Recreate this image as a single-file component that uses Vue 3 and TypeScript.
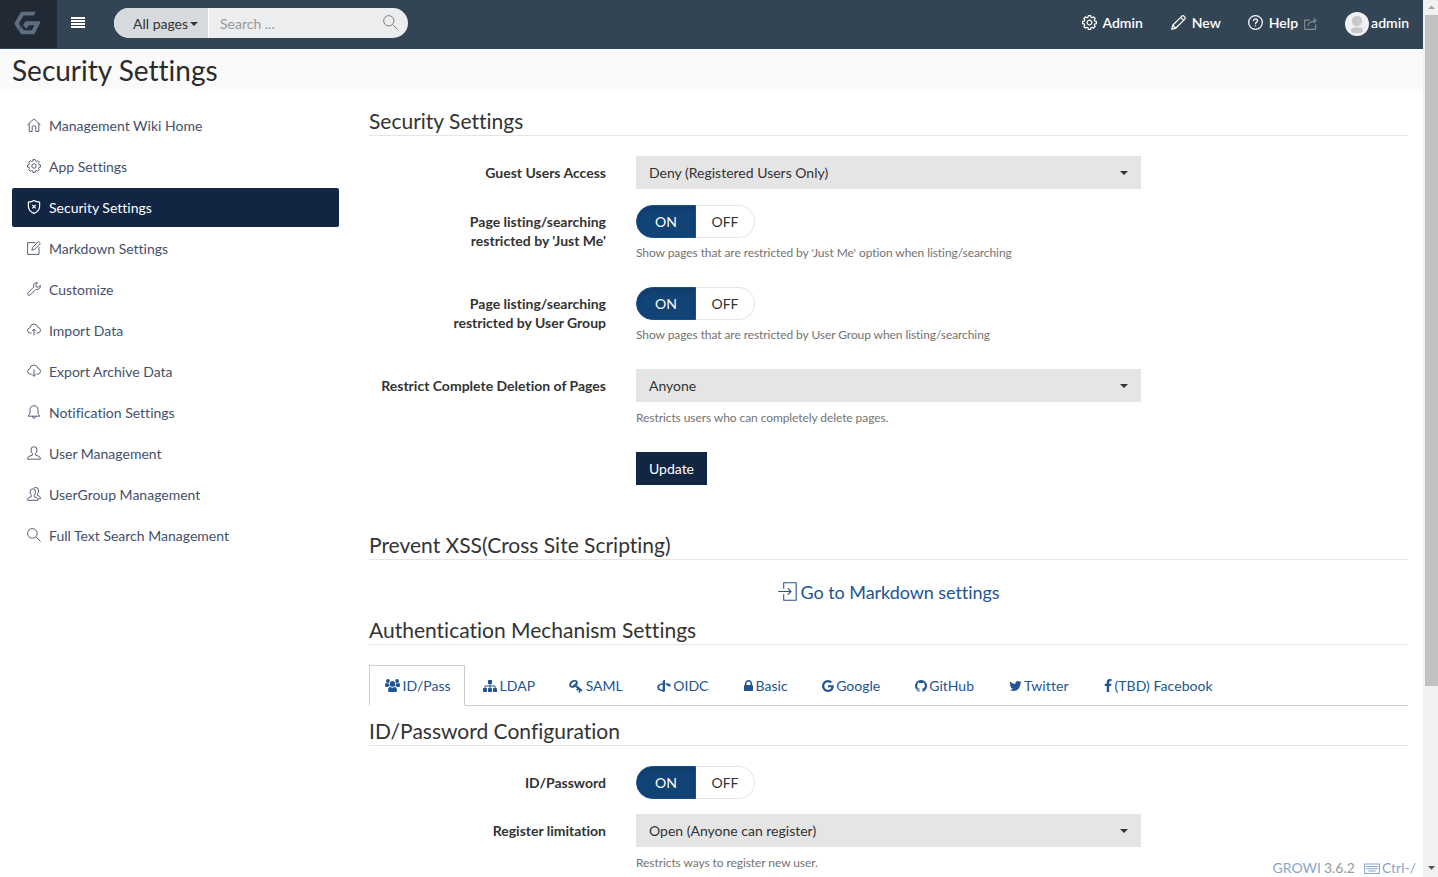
<script setup lang="ts">
import { ref } from 'vue'

interface Glyph {
  box: string
  w: number
  h: number
  d: string[]
  solid?: boolean
}

function gear(c: number, outer: number, inner: number): string {
  const pts: string[] = []
  const at = (r: number, a: number) =>
    `${(c + r * Math.cos(a)).toFixed(2)} ${(c + r * Math.sin(a)).toFixed(2)}`
  for (let i = 0; i < 8; i++) {
    const a = (i * Math.PI) / 4
    pts.push(at(inner, a - 0.27), at(outer, a - 0.17), at(outer, a + 0.17), at(inner, a + 0.27))
  }
  return 'M' + pts.join('L') + 'Z'
}

const line = (...d: string[]): Glyph => ({ box: '0 0 14 14', w: 14, h: 14, d })
const solid = (x: number, width: number, d: string): Glyph => ({
  box: `${x} 0 ${width} 1792`,
  w: width / 128,
  h: 14,
  d: [d],
  solid: true,
})

const cloud =
  'M4.6 10.1H3.3Q.6 9.9.5 7.5Q.6 5.3 2.8 4.9Q3.3 1.1 6.8 1Q10 1.1 10.9 4.3Q13.5 4.8 13.5 7.3Q13.4 9.9 10.8 10.1H9.4'

const glyphs: Record<string, Glyph> = {
  home: line('M.6 6.8L7 .8L13.4 6.8M2.2 5.4V13.4H5.2V8.8Q5.2 8 6 8H8Q8.8 8 8.8 8.8V13.4H11.8V5.4'),
  gear: line(gear(7, 6.5, 5.1), 'M9.2 7A2.2 2.2 0 1 1 4.8 7A2.2 2.2 0 1 1 9.2 7Z'),
  shield: line(
    'M7 .6Q9.5 2 12.6 2.1V6.5Q12.4 11 7 13.4Q1.6 11 1.4 6.5V2.1Q4.5 2 7 .6Z',
    'M5.2 4.8L8.8 8.4M8.8 4.8L5.2 8.4',
  ),
  note: line('M8.6 1.6H.6V13.4H12V6', 'M4.8 9.2L5.6 6.4L11.4.7L13.3 2.5L7.5 8.4Z'),
  wrench: line(
    'M13.3 3.4L11.2 5.2L9.2 4.8L8.8 2.8L10.6.7Q8.6.3 7.2 1.8Q6 3.2 6.6 5.2L1 10.8Q.2 12 1.1 12.9Q2.1 13.8 3.2 13L8.8 7.4Q10.8 8 12.3 6.6Q13.7 5.2 13.3 3.4Z',
  ),
  upload: line(cloud, 'M7 12.4V6.2M5 8.2L7 6.2L9 8.2'),
  download: line(cloud, 'M7 5.6V12.3M5.2 10.4L7 12.3L8.8 10.4'),
  bell: line(
    'M1.2 11.2H12.8Q11 9.8 11 7V5Q10.8.8 7 .7Q3.2.8 3 5V7Q3 9.8 1.2 11.2Z',
    'M5.5 11.4Q5.6 13.3 7 13.3Q8.4 13.3 8.5 11.4',
  ),
  user: line(
    'M7 .7Q10.2.7 10 4Q9.9 6.5 8.6 7.7V9.2L12 10.4Q13.4 10.8 13.4 13.2H.6Q.6 10.8 2 10.4L5.4 9.2V7.7Q4.1 6.5 4 4Q3.8.7 7 .7Z',
  ),
  users: line(
    'M5.8 1.8Q8.7 1.8 8.5 5Q8.4 7.1 7.2 8.3V9.6L9.8 10.6Q10.9 11 10.9 13.3H.6Q.6 11 1.8 10.6L4.4 9.6V8.3Q3.2 7.1 3.1 5Q3 1.8 5.8 1.8Z',
    'M6.8 1.2Q7.6.5 9 .5Q11.8.6 11.6 3.9Q11.5 6 10.3 7.1V8.4L12.4 9.2Q13.4 9.6 13.4 11.8H11.4',
  ),
  search: line('M10.2 5.4A4.8 4.8 0 1 1 .6 5.4A4.8 4.8 0 1 1 10.2 5.4Z', 'M9 9L13.6 13.5'),
  pencil: line('M.7 13.3L1.6 9.6L10.2 1Q11.2.2 12.4 1.4Q13.8 2.7 12.9 3.8L4.3 12.4Z', 'M9 2.2L11.8 5M1.6 9.6L4.3 12.4'),
  help: line(
    'M13.4 7A6.4 6.4 0 1 1 .6 7A6.4 6.4 0 1 1 13.4 7Z',
    'M5.2 5.5Q5.2 3.7 7 3.7Q8.9 3.7 8.9 5.4Q8.9 6.3 7.8 6.9Q7 7.4 7 8.6M7 9.5V10.6',
  ),
  share: line('M6.2 3.4H.7V13.3H12.5V8.2', 'M4.3 9.6Q4.4 4.5 12.8 4M10.2 1.4L13 4L10.2 6.6'),
  login: line('M4.2 5V.6H13.4V13.4H4.2V9', 'M.2 7H9.6M7.2 4.7L9.6 7L7.2 9.3'),
  keyboard: line('M.5 3.5H13.5V11.8H.5Z', 'M2 5.6H12M2 7.6H12M3.8 9.7H10.2'),
  sitemap: solid(
    0,
    1792,
    'M1792 1248v320q0 40-28 68t-68 28h-320q-40 0-68-28t-28-68v-320q0-40 28-68t68-28h96v-192h-512v192h96q40 0 68 28t28 68v320q0 40-28 68t-68 28h-320q-40 0-68-28t-28-68v-320q0-40 28-68t68-28h96v-192h-512v192h96q40 0 68 28t28 68v320q0 40-28 68t-68 28h-320q-40 0-68-28t-28-68v-320q0-40 28-68t68-28h96v-192q0-52 38-90t90-38h512v-192h-96q-40 0-68-28t-28-68v-320q0-40 28-68t68-28h320q40 0 68 28t28 68v320q0 40-28 68t-68 28h-96v192h512q52 0 90 38t38 90v192h96q40 0 68 28t28 68z',
  ),
  lock: solid(
    320,
    1152,
    'M640 768h512v-192q0-106-75-181t-181-75-181 75-75 181v192zm832 96v576q0 40-28 68t-68 28h-960q-40 0-68-28t-28-68v-576q0-40 28-68t68-28h32v-192q0-184 132-316t316-132 316 132 132 316v192h32q40 0 68 28t28 68z',
  ),
  google: solid(
    128,
    1536,
    'M896 786h725q12 67 12 128 0 217-91 387.5t-259.5 266.5-386.5 96q-157 0-299-60.5t-245-163.5-163.5-245-60.5-299 60.5-299 163.5-245 245-163.5 299-60.5q300 0 515 201l-209 201q-123-119-306-119-129 0-238.5 65t-173.5 176.5-64 243.5 64 243.5 173.5 176.5 238.5 65q87 0 160-24t120-60 82-82 51.5-87 22.5-78h-436v-264z',
  ),
  github: solid(
    128,
    1536,
    'M896 128q209 0 385.5 103t279.5 279.5 103 385.5q0 251-146.5 451.5t-378.5 277.5q-27 5-40-7t-13-30q0-3 .5-76.5t.5-134.5q0-97-52-142 57-6 102.5-18t94-39 81-66.5 53-105 20.5-150.5q0-119-79-206 37-91-8-204-28-9-81 11t-92 44l-38 24q-93-26-192-26t-192 26q-16-11-42.5-27t-83.5-38.5-85-13.5q-45 113-8 204-79 87-79 206 0 85 20.5 150t52.5 105 80.5 67 94 39 102.5 18q-39 36-49 103-21 10-45 15t-57 5-65.5-21.5-55.5-62.5q-19-32-48.5-52t-49.5-24l-20-3q-21 0-29 4.5t-5 11.5 9 14 13 12l7 5q22 10 43.5 38t31.5 51l10 23q13 38 44 61.5t67 30 69.5 7 55.5-3.5l23-4q0 38 .5 88.5t.5 54.5q0 18-13 30t-40 7q-232-77-378.5-277.5t-146.5-451.5q0-209 103-385.5t279.5-279.5 385.5-103z',
  ),
  twitter: solid(
    64,
    1664,
    'M1684 408q-67 98-162 167 1 14 1 42 0 130-38 259.5t-115.5 248.5-184.5 210.5-258 146-323 54.5q-271 0-496-145 35 4 78 4 225 0 401-138-105-2-188-64.5t-114-159.5q33 5 61 5 43 0 85-11-112-23-185.5-111.5t-73.5-205.5v-4q68 38 146 41-66-44-105-115t-39-154q0-88 44-163 121 149 294.5 238.5t371.5 99.5q-8-38-8-74 0-134 94.5-228.5t228.5-94.5q140 0 236 102 109-21 205-78-37 115-142 178 93-10 186-50z',
  ),
  facebook: solid(
    384,
    1024,
    'M1343 12v264h-157q-86 0-116 36t-30 108v189h293l-39 296h-254v759h-306v-759h-255v-296h255v-218q0-186 104-288.5t277-102.5q147 0 228 12z',
  ),
  group: {
    box: '0 0 15 14', w: 15, h: 14, solid: true,
    d: [
      'M4.9 4.9A2.6 2.9 0 1 1 10.1 4.9A2.6 2.9 0 1 1 4.9 4.9Z',
      'M5 7.7Q7.5 9.6 10 7.7Q12.1 8.3 12 11.4Q12 13 10.4 13H4.6Q3 13 3 11.4Q2.9 8.3 5 7.7Z',
      'M1 2A1.9 1.9 0 1 1 4.8 2A1.9 1.9 0 1 1 1 2ZM10.2 2A1.9 1.9 0 1 1 14 2A1.9 1.9 0 1 1 10.2 2Z',
      'M.9 3.8Q2.4 4.9 4 4.2Q3.9 5.9 4.9 7Q3.6 7 2.8 8H1.3Q0 8 0 6.8Q0 4.2.9 3.8ZM14.1 3.8Q12.6 4.9 11 4.2Q11.1 5.9 10.1 7Q11.4 7 12.2 8H13.7Q15 8 15 6.8Q15 4.2 14.1 3.8Z',
    ],
  },
  key: {
    box: '0 0 14 14', w: 14, h: 14, solid: true,
    d: [
      'M.2 6Q.2 3.9 2 2.3Q3.8 .8 6 1Q8.7 1.3 8.8 3.9Q8.8 5.8 7.2 7.3Q5.5 8.9 3.2 8.8Q.3 8.6.2 6ZM2 6.2Q2.3 7.4 3.8 6.7L6.6 4.2Q7.5 2.9 6.2 2.6Q5 2.4 3.5 3.6Q2 4.9 2 6.2Z',
      'M6.6 8L8 6.4L13.6 11.2L12.4 12.4L11.6 11.8L11 12.5L11.7 13.1L10.7 14L9.2 12.6L10.2 11.3L9.5 10.7L8.3 11.8L7.1 10.7L8.2 9.5Z',
    ],
  },
  openid: {
    box: '0 0 14 14', w: 14, h: 14, solid: true,
    d: [
      'M5.7 1.8L8 .8V12.2L5.7 13.3V12.2Q.2 11.6.2 8.2Q.2 5 5.7 4.2V5.6Q2.1 6.2 2.1 8.2Q2.1 10.2 5.7 10.7Z',
      'M8.6 4.1Q10.6 4.3 12 5.1L13.1 4.5L13.7 7.7L9.5 6.8L10.7 6.1Q9.8 5.7 8.6 5.5Z',
    ],
  },
}

const menu = [
  { icon: 'home', label: 'Management Wiki Home' },
  { icon: 'gear', label: 'App Settings' },
  { icon: 'shield', label: 'Security Settings' },
  { icon: 'note', label: 'Markdown Settings' },
  { icon: 'wrench', label: 'Customize' },
  { icon: 'upload', label: 'Import Data' },
  { icon: 'download', label: 'Export Archive Data' },
  { icon: 'bell', label: 'Notification Settings' },
  { icon: 'user', label: 'User Management' },
  { icon: 'users', label: 'UserGroup Management' },
  { icon: 'search', label: 'Full Text Search Management' },
]
const activeMenu = ref(2)

const tabs = [
  { icon: 'group', label: 'ID/Pass' },
  { icon: 'sitemap', label: 'LDAP' },
  { icon: 'key', label: 'SAML' },
  { icon: 'openid', label: 'OIDC' },
  { icon: 'lock', label: 'Basic' },
  { icon: 'google', label: 'Google' },
  { icon: 'github', label: 'GitHub' },
  { icon: 'twitter', label: 'Twitter' },
  { icon: 'facebook', label: '(TBD) Facebook' },
]
const activeTab = ref(0)

const rows = [
  { kind: 'select', label: ['Guest Users Access'], value: 'Deny (Registered Users Only)', help: '' },
  { kind: 'toggle', label: ['Page listing/searching', "restricted by 'Just Me'"], value: '', help: "Show pages that are restricted by 'Just Me' option when listing/searching" },
  { kind: 'toggle', label: ['Page listing/searching', 'restricted by User Group'], value: '', help: 'Show pages that are restricted by User Group when listing/searching' },
  { kind: 'select', label: ['Restrict Complete Deletion of Pages'], value: 'Anyone', help: 'Restricts users who can completely delete pages.' },
]
const authRows = [
  { kind: 'toggle', label: ['ID/Password'], value: '', help: '' },
  { kind: 'select', label: ['Register limitation'], value: 'Open (Anyone can register)', help: 'Restricts ways to register new user.' },
]
const sections = { rows, authRows }

const navLinks = [
  { icon: 'gear', label: 'Admin', ext: false },
  { icon: 'pencil', label: 'New', ext: false },
  { icon: 'help', label: 'Help', ext: true },
]
</script>

<template>
  <div class="window">
    <div class="page">
      <header class="navbar">
        <a class="logo">
          <svg width="27" height="24" viewBox="0 0 27 24">
            <path d="M7 .8H21.8L19.8 4.6H9.6L4.9 12.4L6.8 15.8L4.4 19.4L.3 12.4Z" />
            <path d="M11.3 10.3H26V12L20.4 23.2H7.2L4.8 19.2L7.4 15.2L9.7 19.2H17.8L20.4 14.2H14.8L12.6 17.8L9 14.4Z" />
          </svg>
        </a>
        <button class="burger"><i /><i /><i /><i /></button>
        <div class="search">
          <span class="scope">All pages<b class="caret" /></span>
          <span class="query">Search ...</span>
          <svg class="ico" width="15" height="15" viewBox="0 0 14 14">
            <path v-for="d in glyphs.search.d" :key="d" :d="d" />
          </svg>
        </div>
        <nav class="links">
          <a v-for="l in navLinks" :key="l.label" :class="l.label.toLowerCase()">
            <svg class="ico" width="15" height="15" viewBox="0 0 14 14">
              <path v-for="d in glyphs[l.icon].d" :key="d" :d="d" />
            </svg>
            <span>{{ l.label }}</span>
            <svg v-if="l.ext" class="ico ext" width="13" height="13" viewBox="0 0 14 14">
              <path v-for="d in glyphs.share.d" :key="d" :d="d" />
            </svg>
          </a>
          <a class="account">
            <svg width="24" height="24" viewBox="0 0 24 24">
              <circle cx="12" cy="12" r="12" fill="#eff0f3" />
              <circle cx="12" cy="9" r="5.2" fill="#c8c8c9" />
              <path d="M6 18.4Q6 15.2 12 15.2Q18 15.2 18 18.4Q18 21 12 21Q6 21 6 18.4Z" fill="#c8c8c9" />
            </svg>
            <span>admin</span>
          </a>
        </nav>
      </header>

      <div class="title"><h1>Security Settings</h1></div>

      <div class="body">
        <aside class="side">
          <a v-for="(m, i) in menu" :key="m.label" :class="{ active: i === activeMenu }" @click="activeMenu = i">
            <svg class="ico" width="14" height="14" viewBox="0 0 14 14">
              <path v-for="d in glyphs[m.icon].d" :key="d" :d="d" />
            </svg>
            <span>{{ m.label }}</span>
          </a>
        </aside>

        <main class="main">
          <h2>Security Settings</h2>
          <div class="form">
            <div v-for="(r, i) in sections.rows" :key="i" class="row" :class="[r.kind + '-row', { tall: r.help }]">
              <label><span v-for="t in r.label" :key="t">{{ t }}</span></label>
              <div class="field">
                <div v-if="r.kind === 'select'" class="select">{{ r.value }}<b class="caret" /></div>
                <div v-else class="toggle"><span class="on">ON</span><span class="off">OFF</span></div>
                <p v-if="r.help">{{ r.help }}</p>
              </div>
            </div>
            <button class="update">Update</button>
          </div>

          <h2 class="xss">Prevent XSS(Cross Site Scripting)</h2>
          <a class="goto">
            <svg class="ico" width="19" height="19" viewBox="0 0 14 14">
              <path v-for="d in glyphs.login.d" :key="d" :d="d" />
            </svg>
            <span>Go to Markdown settings</span>
          </a>

          <h2 class="auth">Authentication Mechanism Settings</h2>
          <div class="tabs">
            <a v-for="(t, i) in tabs" :key="t.label" :class="[t.icon, { current: i === activeTab }]" @click="activeTab = i">
              <svg class="fill" :width="glyphs[t.icon].w" :height="glyphs[t.icon].h" :viewBox="glyphs[t.icon].box">
                <path v-for="d in glyphs[t.icon].d" :key="d" :d="d" fill-rule="evenodd" />
              </svg>
              <span>{{ t.label }}</span>
            </a>
          </div>

          <h2 class="idpass">ID/Password Configuration</h2>
          <div class="form">
            <div v-for="(r, i) in sections.authRows" :key="i" class="row auth-row" :class="r.kind + '-row'">
              <label><span v-for="t in r.label" :key="t">{{ t }}</span></label>
              <div class="field">
                <div v-if="r.kind === 'select'" class="select">{{ r.value }}<b class="caret" /></div>
                <div v-else class="toggle"><span class="on">ON</span><span class="off">OFF</span></div>
                <p v-if="r.help">{{ r.help }}</p>
              </div>
            </div>
          </div>
        </main>
      </div>

      <footer class="version">
        <a>GROWI</a><span class="num">3.6.2</span>
        <svg class="ico" width="16" height="16" viewBox="0 0 14 14">
          <path v-for="d in glyphs.keyboard.d" :key="d" :d="d" />
        </svg>
        <a>Ctrl-/</a>
      </footer>
    </div>

    <div class="scrollbar">
      <svg width="15" height="15" viewBox="0 0 15 15"><path d="M5 9H12L8.5 5.5Z" fill="#a3a3a3" /></svg>
      <div class="thumb" />
      <svg class="down" width="15" height="17" viewBox="0 0 15 17"><path d="M5 6H12L8.5 9.8Z" fill="#505050" /></svg>
    </div>
  </div>
</template>

<style>
body {
  margin: 0;
  background: #fff;
  overflow: hidden;
}
</style>

<style scoped>
.window {
  position: relative;
  display: flex;
  width: 1438px;
  height: 877px;
  overflow: hidden;
  font-family: Lato, "Open Sans", sans-serif;
  font-size: 14px;
  line-height: 19px;
  font-variant-ligatures: none;
  color: #333;
}
.page {
  width: 1423px;
  height: 877px;
  overflow: hidden;
}
.ico {
  flex: none;
  fill: none;
  stroke: currentColor;
  stroke-width: 0.9;
  stroke-linejoin: round;
}
.caret {
  flex: none;
  width: 0;
  height: 0;
  border: 4px solid transparent;
  border-top-color: #333;
  border-bottom: 0;
}
.navbar {
  display: flex;
  height: 49px;
  background: #334455;
}
.logo {
  display: flex;
  align-items: center;
  width: 57px;
  height: 48px;
  padding: 0 0 2px 14px;
  box-sizing: border-box;
  background: #212a34;
}
.logo svg {
  fill: #5d6e80;
}
.burger {
  display: flex;
  flex-direction: column;
  gap: 1px;
  width: 14px;
  margin: 17px 0 0 14px;
  padding: 0;
  border: 0;
  background: none;
}
.burger i {
  width: 14px;
  height: 2px;
  background: #fff;
}
.search {
  display: flex;
  align-items: center;
  width: 294px;
  height: 30px;
  margin: 8px 0 0 29px;
  border-radius: 15px;
  overflow: hidden;
  background: #ebedee;
}
.scope {
  display: flex;
  align-items: center;
  box-sizing: border-box;
  width: 95px;
  height: 30px;
  padding-left: 19px;
  padding-top: 1px;
  border-right: 1px solid #fff;
  background: #d6dadd;
}
.scope .caret {
  margin-left: 2px;
}
.query {
  flex: 1;
  padding: 1px 0 0 11px;
  color: #999;
}
.search .ico {
  margin: 0 10px 2px 0;
  color: #777;
}
.links {
  display: flex;
  flex: 1;
  justify-content: flex-end;
  height: 45px;
  padding-right: 14px;
}
.links a {
  display: flex;
  align-items: center;
  color: #fff;
  font-weight: 600;
}
.links .ico {
  margin: 0 6px 1px 0;
  stroke-width: 1.15;
}
.links .new {
  margin-left: 28px;
}
.links .help {
  margin-left: 27px;
}
.links .ext {
  margin: 1px 0 0 5px;
  opacity: 0.4;
}
.links .account {
  margin-left: 28px;
}
.links .help span {
  margin-right: 1px;
}
.account svg {
  margin: 3px 2px 0 0;
}
.title {
  height: 42px;
  background: #fafafa;
}
h1 {
  margin: 0;
  padding: 1px 0 0 12px;
  font-size: 28px;
  line-height: 40px;
  font-weight: 400;
  color: #2b2b2b;
}
.body {
  display: flex;
}
.side {
  width: 327px;
  margin: 15px 30px 0 12px;
}
.side a {
  display: flex;
  align-items: center;
  box-sizing: border-box;
  height: 39px;
  margin-bottom: 2px;
  padding: 0 0 1px 15px;
  border-radius: 2px;
  color: #444f6b;
}
.side .ico {
  margin: 0 8px 0 0;
}
.side .active {
  background: #122643;
  color: #fff;
}
.side .active .ico {
  stroke-width: 1.2;
}
.main {
  width: 1039px;
}
h2 {
  box-sizing: border-box;
  height: 31px;
  margin: 14px 0 20px;
  border-bottom: 1px solid #e5e5e5;
  font-size: 21px;
  line-height: 32px;
  font-weight: 400;
}
.row {
  display: flex;
  height: 33px;
  margin-bottom: 16px;
}
.row.tall {
  height: 66px;
}
.row.select-row.tall {
  height: 67px;
}
.row label {
  display: flex;
  flex-direction: column;
  width: 237px;
  padding-top: 7px;
  margin-right: 30px;
  text-align: right;
  font-weight: 700;
}
.select {
  display: flex;
  align-items: center;
  justify-content: space-between;
  box-sizing: border-box;
  width: 505px;
  height: 33px;
  padding: 0 13px 1px;
  background: #e5e5e5;
}
.select .caret {
  margin-top: 1px;
}
.field p {
  margin: 6px 0 0;
  font-size: 12px;
  line-height: 18px;
  letter-spacing: -0.08px;
  color: #737373;
  white-space: nowrap;
}
.select-row p {
  margin-top: 7px;
}
.auth-row {
  margin-bottom: 15px;
}
.toggle {
  display: flex;
  width: 119px;
  height: 33px;
}
.toggle span {
  display: flex;
  align-items: center;
  justify-content: center;
  box-sizing: border-box;
  padding-bottom: 1px;
}
.on {
  width: 60px;
  border: 1px solid #12508f;
  border-radius: 17px 0 0 17px;
  background: #124376;
  box-shadow: inset 0 3px 5px rgba(0, 0, 0, 0.125);
  color: #fff;
}
.off {
  width: 59px;
  border: 1px solid #e5e5e5;
  border-left: 0;
  border-radius: 0 17px 17px 0;
}
.update {
  display: block;
  width: 71px;
  height: 33px;
  margin-left: 267px;
  padding: 0 0 1px;
  border: 0;
  background: #122643;
  color: #fff;
  font: inherit;
}
.xss {
  margin-top: 44px;
}
.goto {
  display: flex;
  align-items: center;
  justify-content: center;
  height: 24px;
  padding-bottom: 2px;
  font-size: 18px;
  letter-spacing: -0.06px;
  color: #215492;
}
.goto .ico {
  margin: 0 4px 2px 0;
  stroke-width: 0.8;
}
.auth {
  margin-top: 8px;
}
.tabs {
  display: flex;
  height: 41px;
  box-sizing: border-box;
  border-bottom: 1px solid #ccc;
}
.tabs a {
  display: flex;
  align-items: center;
  box-sizing: border-box;
  height: 41px;
  margin-right: 2px;
  padding: 0 15px;
  border: 1px solid transparent;
  color: #215492;
}
.tabs .current {
  width: 96px;
  padding-right: 0;
  border-color: #ccc;
  border-bottom-color: #fff;
  background: #fff;
}
.tabs svg {
  flex: none;
  margin-right: 2.6px;
}
.tabs .openid {
  padding-right: 16.5px;
}
.tabs .github,
.tabs .google {
  padding-right: 15.5px;
}
.tabs .twitter {
  padding-right: 16px;
}
.tabs .twitter span {
  letter-spacing: 0.12px;
}
.tabs .facebook span {
  letter-spacing: 0.07px;
}
.fill {
  fill: currentColor;
}
.idpass {
  margin-top: 9px;
}
.version {
  position: absolute;
  right: 22px;
  bottom: 0;
  display: flex;
  align-items: center;
  color: #8aa5cb;
}
.version .num {
  margin: 0 9px 0 3px;
  color: #999;
}
.version .ico {
  margin-right: 2px;
}
.scrollbar {
  display: flex;
  flex-direction: column;
  width: 15px;
  background: #f1f1f1;
}
.thumb {
  width: 13px;
  height: 671px;
  margin-left: 2px;
  background: #c1c1c1;
}
.down {
  margin-top: auto;
}
</style>
